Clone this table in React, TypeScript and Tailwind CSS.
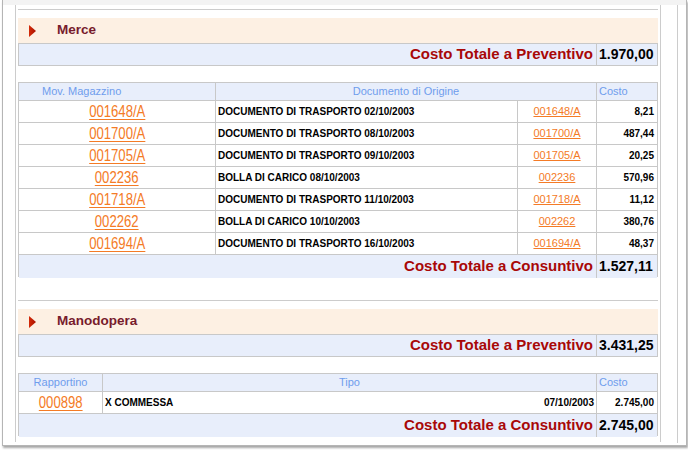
import React from "react";

type Row = { mov: string; doc: string; orig: string; costo: string };

const merce: Row[] = [
  { mov: "001648/A", doc: "DOCUMENTO DI TRASPORTO 02/10/2003", orig: "001648/A", costo: "8,21" },
  { mov: "001700/A", doc: "DOCUMENTO DI TRASPORTO 08/10/2003", orig: "001700/A", costo: "487,44" },
  { mov: "001705/A", doc: "DOCUMENTO DI TRASPORTO 09/10/2003", orig: "001705/A", costo: "20,25" },
  { mov: "002236", doc: "BOLLA DI CARICO 08/10/2003", orig: "002236", costo: "570,96" },
  { mov: "001718/A", doc: "DOCUMENTO DI TRASPORTO 11/10/2003", orig: "001718/A", costo: "11,12" },
  { mov: "002262", doc: "BOLLA DI CARICO 10/10/2003", orig: "002262", costo: "380,76" },
  { mov: "001694/A", doc: "DOCUMENTO DI TRASPORTO 16/10/2003", orig: "001694/A", costo: "48,37" },
];

function SectionHeader({ title }: { title: string }) {
  return (
    <div className="h-[25px] bg-[#fdf0e3] flex items-center">
      <svg width="7" height="12" viewBox="0 0 7 12" className="ml-[11px]">
        <defs>
          <linearGradient id="tri" x1="0" y1="0" x2="1" y2="0">
            <stop offset="0" stopColor="#d42a08" />
            <stop offset="1" stopColor="#a81000" />
          </linearGradient>
        </defs>
        <polygon points="0,0 7,6 0,12" fill="url(#tri)" />
      </svg>
      <span className="ml-[21px] text-[13.5px] font-bold text-[#771b2c]">{title}</span>
    </div>
  );
}

function TotalRow({ label, value, boxed }: { label: string; value: string; boxed?: boolean }) {
  return (
    <div
      className={
        "flex h-[23px] bg-[#e8eefb] " +
        (boxed ? "border border-[#c8c8c8]" : "")
      }
    >
      <div className="flex-1 flex items-center justify-end pr-[3px] text-[15px] font-bold text-[#a80808]">
        {label}
      </div>
      <div className="w-[61px] border-l border-[#c8c8c8] flex items-center pl-[2px] text-[14px] font-bold text-black">
        {value}
      </div>
    </div>
  );
}

// narrow orange link, as in the old report
const bigLink =
  "inline-block scale-x-[0.82] text-[16px] text-[#f47b26] underline underline-offset-[2px]";
const smallLink = "text-[11px] text-[#f47b26] underline";
const head = "text-[11px] text-[#6f9ded]";

export default function App() {
  return (
    <div className="w-[688px] h-[450px] bg-white font-['Liberation_Sans',Arial,sans-serif]">
      <div className="ml-[2px] w-[685px] h-[446px] border-x border-b border-[#b5b5b5] shadow-[1px_2px_2px_rgba(0,0,0,0.35)] bg-white flex flex-col">
        <div className="h-[5px] bg-[#f3f3f3]" />
        <div className="flex">
          <div className="ml-[12px] w-[646px] h-[437px] border-x border-[#cccccc] px-[2px] pt-[4px]">
            <div className="border-t border-[#cccccc]" />

            {/* Merce */}
            <div className="mt-[8px]">
              <SectionHeader title="Merce" />
              <TotalRow label="Costo Totale a Preventivo" value="1.970,00" boxed />
              <div className="mt-[16px] border-t border-r border-[#c8c8c8] grid grid-cols-[197px_302px_79px_61px]">
                <div className={"h-[18px] border-l border-b border-[#c8c8c8] bg-[#e8eefb] flex items-center pl-[23px] " + head}>
                  Mov. Magazzino
                </div>
                <div className={"col-span-2 h-[18px] border-l border-b border-[#c8c8c8] bg-[#e8eefb] flex items-center justify-center " + head}>
                  Documento di Origine
                </div>
                <div className={"h-[18px] border-l border-b border-[#c8c8c8] bg-[#e8eefb] flex items-center pl-[2px] " + head}>
                  Costo
                </div>
                {merce.map((r) => (
                  <React.Fragment key={r.mov}>
                    <div className="h-[22px] border-l border-b border-[#c8c8c8] flex items-center justify-center">
                      <span className={bigLink}>{r.mov}</span>
                    </div>
                    <div className="h-[22px] border-l border-b border-[#c8c8c8] flex items-center pl-[2px] text-[10px] font-bold text-black">
                      {r.doc}
                    </div>
                    <div className="h-[22px] border-l border-b border-[#c8c8c8] flex items-center justify-center">
                      <span className={smallLink}>{r.orig}</span>
                    </div>
                    <div className="h-[22px] border-l border-b border-[#c8c8c8] flex items-center justify-end pr-[3px] text-[10px] font-bold text-black">
                      {r.costo}
                    </div>
                  </React.Fragment>
                ))}
                <div className="col-span-4 h-[22px] border-l border-b border-[#c8c8c8]">
                  <div className="h-[21px]">
                    <TotalRow label="Costo Totale a Consuntivo" value="1.527,11" />
                  </div>
                </div>
              </div>
            </div>

            <div className="mt-[23px] border-t border-[#cccccc]" />

            {/* Manodopera */}
            <div className="mt-[8px]">
              <SectionHeader title="Manodopera" />
              <TotalRow label="Costo Totale a Preventivo" value="3.431,25" boxed />
              <div className="mt-[16px] border-t border-r border-[#c8c8c8] grid grid-cols-[84px_494px_61px]">
                <div className={"h-[18px] border-l border-b border-[#c8c8c8] bg-[#e8eefb] flex items-center justify-center " + head}>
                  Rapportino
                </div>
                <div className={"h-[18px] border-l border-b border-[#c8c8c8] bg-[#e8eefb] flex items-center justify-center " + head}>
                  Tipo
                </div>
                <div className={"h-[18px] border-l border-b border-[#c8c8c8] bg-[#e8eefb] flex items-center pl-[2px] " + head}>
                  Costo
                </div>
                <div className="h-[22px] border-l border-b border-[#c8c8c8] flex items-center justify-center">
                  <span className={bigLink}>000898</span>
                </div>
                <div className="h-[22px] border-l border-b border-[#c8c8c8] flex items-center justify-between pl-[2px] pr-[2px] text-[10px] font-bold text-black">
                  <span>X COMMESSA</span>
                  <span>07/10/2003</span>
                </div>
                <div className="h-[22px] border-l border-b border-[#c8c8c8] flex items-center justify-end pr-[3px] text-[10px] font-bold text-black">
                  2.745,00
                </div>
                <div className="col-span-3 h-[22px] border-l border-b border-[#c8c8c8]">
                  <div className="h-[21px]">
                    <TotalRow label="Costo Totale a Consuntivo" value="2.745,00" />
                  </div>
                </div>
              </div>
            </div>
          </div>
          <div className="ml-[16px] h-[438px] border-l border-[#cccccc]" />
        </div>
      </div>
    </div>
  );
}
